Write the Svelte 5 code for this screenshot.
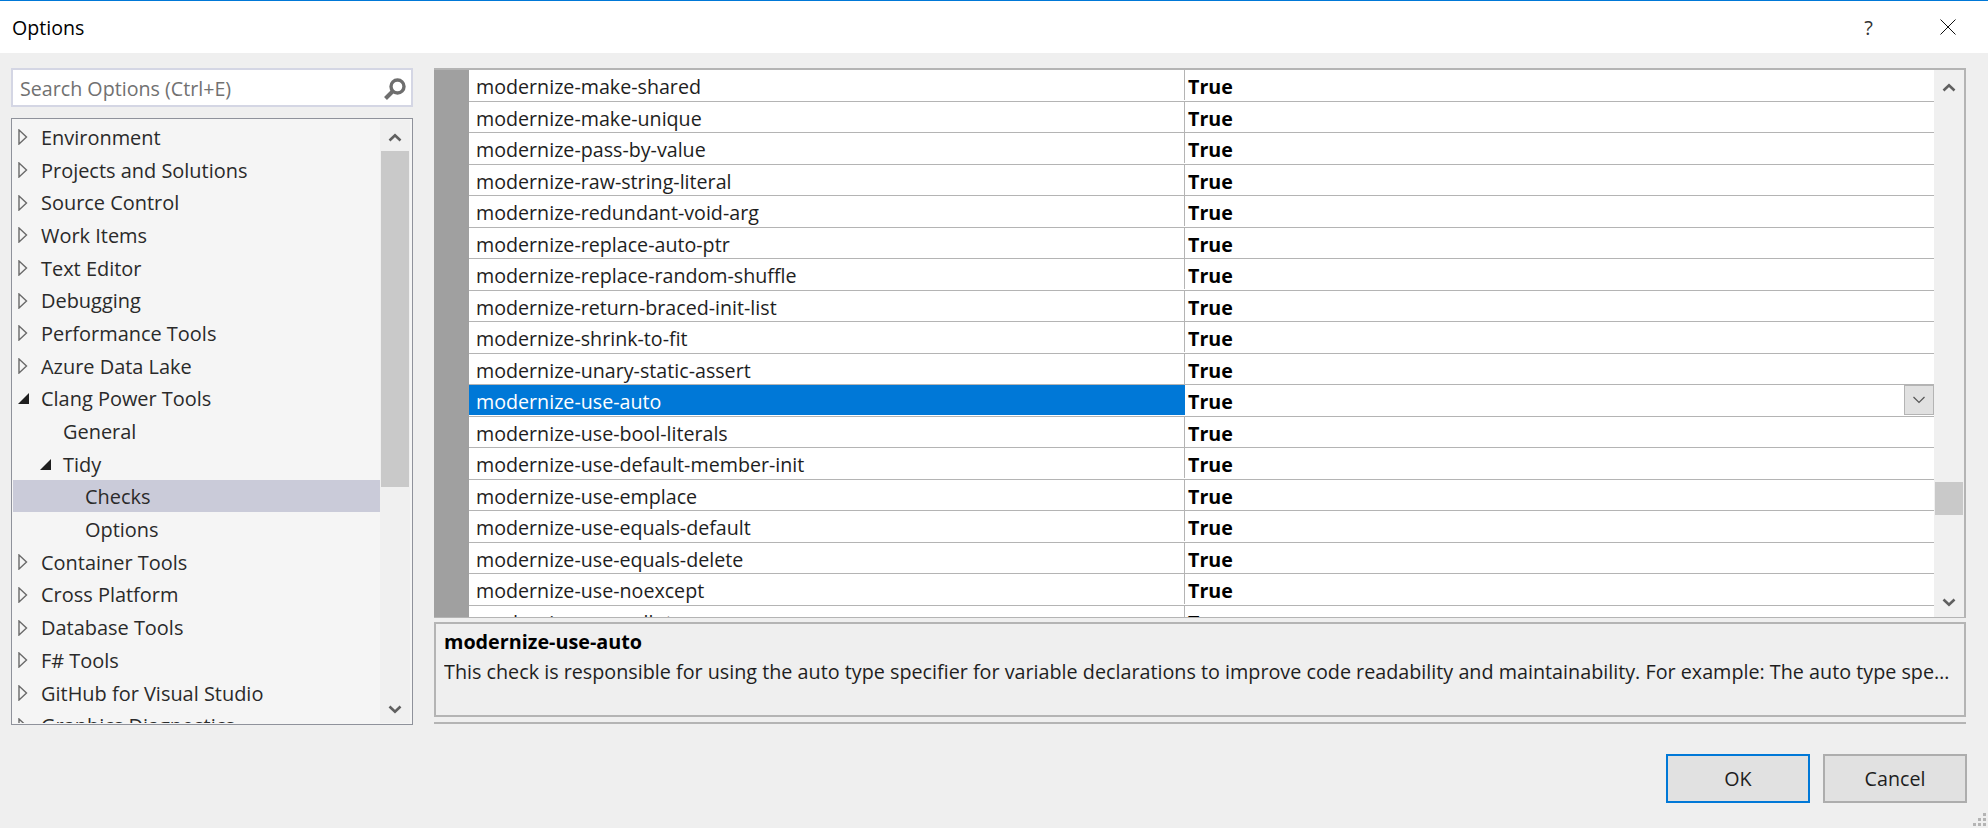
<script>
	const tree = [
		{ label: 'Environment', depth: 0, arrow: 'closed' },
		{ label: 'Projects and Solutions', depth: 0, arrow: 'closed' },
		{ label: 'Source Control', depth: 0, arrow: 'closed' },
		{ label: 'Work Items', depth: 0, arrow: 'closed' },
		{ label: 'Text Editor', depth: 0, arrow: 'closed' },
		{ label: 'Debugging', depth: 0, arrow: 'closed' },
		{ label: 'Performance Tools', depth: 0, arrow: 'closed' },
		{ label: 'Azure Data Lake', depth: 0, arrow: 'closed' },
		{ label: 'Clang Power Tools', depth: 0, arrow: 'open' },
		{ label: 'General', depth: 1 },
		{ label: 'Tidy', depth: 1, arrow: 'open' },
		{ label: 'Checks', depth: 2, selected: true },
		{ label: 'Options', depth: 2 },
		{ label: 'Container Tools', depth: 0, arrow: 'closed' },
		{ label: 'Cross Platform', depth: 0, arrow: 'closed' },
		{ label: 'Database Tools', depth: 0, arrow: 'closed' },
		{ label: 'F# Tools', depth: 0, arrow: 'closed' },
		{ label: 'GitHub for Visual Studio', depth: 0, arrow: 'closed' },
		{ label: 'Graphics Diagnostics', depth: 0, arrow: 'closed' }
	];

	const checks = [
		'make-shared',
		'make-unique',
		'pass-by-value',
		'raw-string-literal',
		'redundant-void-arg',
		'replace-auto-ptr',
		'replace-random-shuffle',
		'return-braced-init-list',
		'shrink-to-fit',
		'unary-static-assert',
		'use-auto',
		'use-bool-literals',
		'use-default-member-init',
		'use-emplace',
		'use-equals-default',
		'use-equals-delete',
		'use-noexcept',
		'use-nullptr'
	];
	const selectedCheck = 'use-auto';
</script>

<div class="dialog">
	<header class="titlebar">
		<span class="title">Options</span>
		<span class="help">?</span>
		<svg class="close" width="16" height="16" viewBox="0 0 16 16">
			<path d="M0.5 0.5L15.5 15.5M15.5 0.5L0.5 15.5" stroke="#111" stroke-width="1" fill="none" />
		</svg>
	</header>

	<main class="body">
		<div class="left">
			<div class="search">
				<span class="placeholder">Search Options (Ctrl+E)</span>
				<svg width="24" height="24" viewBox="0 0 24 24">
					<circle cx="14.5" cy="9.5" r="6.5" stroke="#6e6e6e" stroke-width="3.4" fill="none" />
					<path d="M9.5 14.5L2.5 21.5" stroke="#6e6e6e" stroke-width="4" fill="none" />
				</svg>
			</div>
			<div class="tree">
				<ul>
					{#each tree as item}
						<li class:selected={item.selected} class="depth{item.depth}">
							<span class="twist">
								{#if item.arrow === 'closed'}
									<svg width="10" height="16" viewBox="0 0 10 16">
										<path d="M1 1L8.5 8L1 15Z" stroke="#6a6a6a" stroke-width="1.4" fill="none" />
									</svg>
								{:else if item.arrow === 'open'}
									<svg width="11" height="11" viewBox="0 0 11 11">
										<path d="M11 0V11H0Z" fill="#1e1e1e" />
									</svg>
								{/if}
							</span>
							<span>{item.label}</span>
						</li>
					{/each}
				</ul>
				<div class="scrollbar tree-bar">
					<svg class="chev" width="14" height="9" viewBox="0 0 14 9">
						<path d="M1.5 7.5L7 2.2L12.5 7.5" stroke="#606060" stroke-width="2.6" fill="none" />
					</svg>
					<div class="track"><div class="thumb tree-thumb"></div></div>
					<svg class="chev" width="14" height="9" viewBox="0 0 14 9">
						<path d="M1.5 1.5L7 6.8L12.5 1.5" stroke="#606060" stroke-width="2.6" fill="none" />
					</svg>
				</div>
			</div>
		</div>

		<div class="right">
			<div class="grid">
				<div class="gutter"></div>
				<div class="rows">
					{#each checks as check}
						<div class="row" class:active={check === selectedCheck}>
							<div class="name">modernize-{check}</div>
							<div class="value">
								<span>True</span>
								{#if check === selectedCheck}
									<span class="combo">
										<svg width="14" height="8" viewBox="0 0 14 8">
											<path d="M1.5 1L7 6.5L12.5 1" stroke="#555" stroke-width="1.2" fill="none" />
										</svg>
									</span>
								{/if}
							</div>
						</div>
					{/each}
				</div>
				<div class="scrollbar grid-bar">
					<svg class="chev" width="14" height="9" viewBox="0 0 14 9">
						<path d="M1.5 7.5L7 2.2L12.5 7.5" stroke="#606060" stroke-width="2.6" fill="none" />
					</svg>
					<div class="track"><div class="thumb grid-thumb"></div></div>
					<svg class="chev" width="14" height="9" viewBox="0 0 14 9">
						<path d="M1.5 1.5L7 6.8L12.5 1.5" stroke="#606060" stroke-width="2.6" fill="none" />
					</svg>
				</div>
			</div>
			<div class="desc">
				<strong>modernize-use-auto</strong>
				<p>This check is responsible for using the auto type specifier for variable declarations to improve code readability and maintainability. For example: The auto type specifier will</p>
			</div>
			<div class="rule"></div>
		</div>
	</main>

	<footer class="buttons">
		<button class="primary">OK</button>
		<button>Cancel</button>
	</footer>

	<svg class="grip" width="14" height="14" viewBox="0 0 14 14">
		<path d="M10 0h3v3h-3zM5 5h3v3H5zM10 5h3v3h-3zM0 10h3v3H0zM5 10h3v3H5zM10 10h3v3h-3z" fill="#b4b4b4" />
	</svg>
</div>

<style>
	:global(body) {
		margin: 0;
		background: #efefef;
	}
	.dialog {
		position: relative;
		width: 1988px;
		height: 828px;
		overflow: hidden;
		font-family: 'Open Sans', sans-serif;
		font-size: 19.67px;
		color: #1e1e1e;
		background: #efefef;
		border-top: 1px solid #0078d7;
		box-sizing: border-box;
	}
	.titlebar {
		height: 52px;
		background: #fff;
		display: flex;
		align-items: center;
		padding: 0 32px 0 12px;
		box-sizing: border-box;
		color: #000;
	}
	.title {
		flex: 1;
		font-size: 19.6px;
	}
	.help {
		margin-right: 67px;
		font-size: 20px;
		color: #333;
	}
	.body {
		display: flex;
		gap: 21px;
		padding: 15px 22px 0 11px;
	}
	.left {
		width: 402px;
		flex: none;
		display: flex;
		flex-direction: column;
		gap: 11px;
	}
	.search {
		height: 39px;
		box-sizing: border-box;
		background: #fff;
		border: 2px solid #d4d6e4;
		display: flex;
		align-items: center;
		justify-content: space-between;
		padding: 2px 4px 0 7px;
	}
	.placeholder {
		color: #717171;
	}
	.tree {
		height: 607px;
		box-sizing: border-box;
		border: 1.5px solid #8f929b;
		background: #f5f5f5;
		display: flex;
		padding: 1px;
		overflow: hidden;
		font-size: 19.95px;
	}
	ul {
		flex: 1;
		margin: 0;
		padding: 0;
		list-style: none;
		overflow: hidden;
	}
	li {
		height: 32.7px;
		box-sizing: border-box;
		padding-top: 2px;
		display: flex;
		align-items: center;
		white-space: nowrap;
		color: #2a2a2a;
	}
	li.selected {
		background: #cacbd9;
	}
	.twist {
		width: 20px;
		margin-right: 8px;
		display: flex;
		justify-content: center;
	}
	.depth0 {
		padding-left: 0;
	}
	.depth1 {
		padding-left: 22px;
	}
	.depth2 {
		padding-left: 44px;
	}
	.scrollbar {
		width: 30px;
		flex: none;
		background: #f0f0f0;
		display: flex;
		flex-direction: column;
		align-items: center;
		padding-top: 13px;
		box-sizing: border-box;
		margin-right: 1px;
	}
	.tree-bar {
		padding-bottom: 9px;
	}
	.chev {
		flex: none;
	}
	.track {
		flex: 1;
		width: 28px;
	}
	.thumb {
		background: #c9c9c9;
		width: 28px;
	}
	.tree-thumb {
		height: 336px;
		margin-top: 9px;
	}
	.right {
		width: 1532px;
		flex: none;
		display: flex;
		flex-direction: column;
	}
	.grid {
		height: 550px;
		box-sizing: border-box;
		border: 2px solid #b4b4b4;
		border-left: 0;
		border-bottom-width: 1px;
		display: flex;
		overflow: hidden;
		background: #fff;
	}
	.gutter {
		width: 35px;
		flex: none;
		background: #a0a0a0;
	}
	.rows {
		flex: 1;
		overflow: hidden;
	}
	.row {
		height: 31.5px;
		box-sizing: border-box;
		border-bottom: 1.5px solid #b4b4b4;
		display: grid;
		grid-template-columns: 716px 1fr;
		overflow: hidden;
	}
	.name {
		height: 30px;
		padding-left: 7px;
		line-height: 34px;
		border-right: 1px solid #b4b4b4;
		color: #1e1e1e;
	}
	.value {
		height: 30px;
		padding-left: 3px;
		font-weight: 700;
		color: #000;
		line-height: 34px;
		position: relative;
	}
	.row.active .name {
		background: #0078d7;
		color: #fff;
		border-right: 0;
	}
	.combo {
		position: absolute;
		right: 0;
		top: 0;
		bottom: 0;
		width: 30px;
		box-sizing: border-box;
		background: #e1e1e1;
		border: 1.5px solid #b4b4b4;
		display: flex;
		align-items: center;
		justify-content: center;
	}
	.grid-bar {
		width: 30px;
		margin-right: 0;
		padding-top: 13px;
		padding-bottom: 10px;
	}
	.grid-thumb {
		height: 33px;
		margin-top: 390px;
	}
	.desc {
		margin-top: 4px;
		height: 95px;
		box-sizing: border-box;
		border: 2px solid #b4b4b4;
		padding: 4px 8px;
		color: #1e1e1e;
		font-size: 19.75px;
	}
	.desc strong {
		display: block;
		color: #000;
		line-height: 28px;
	}
	.desc p {
		margin: 0;
		line-height: 32px;
		white-space: nowrap;
		overflow: hidden;
		text-overflow: ellipsis;
	}
	.rule {
		margin-top: 5px;
		height: 2px;
		background: #b4b4b4;
	}
	.buttons {
		display: flex;
		justify-content: flex-end;
		gap: 13px;
		padding: 29px 21px 0 0;
	}
	button {
		width: 144px;
		height: 49px;
		box-sizing: border-box;
		background: #e1e1e1;
		border: 2px solid #adadad;
		font: inherit;
		color: #1e1e1e;
		padding: 0;
	}
	button.primary {
		border-color: #0078d7;
	}
	.grip {
		position: absolute;
		right: 1px;
		bottom: 1px;
	}
</style>
